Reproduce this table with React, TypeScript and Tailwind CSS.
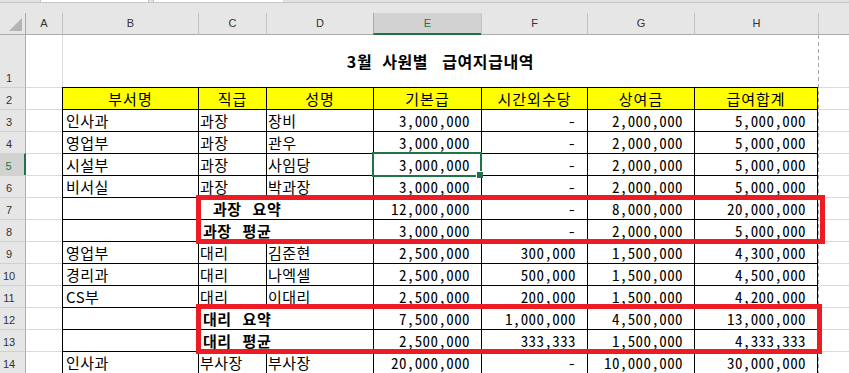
import React from 'react';

type Row = {
  n: number;
  b?: string;
  c?: string;
  d?: string;
  sum?: [string, string];
  indent?: boolean;
  e: string;
  f: string;
  g: string;
  h: string;
};

const rows: Row[] = [
  { n: 3, b: '인사과', c: '과장', d: '장비', e: '3,000,000', f: '-', g: '2,000,000', h: '5,000,000' },
  { n: 4, b: '영업부', c: '과장', d: '관우', e: '3,000,000', f: '-', g: '2,000,000', h: '5,000,000' },
  { n: 5, b: '시설부', c: '과장', d: '사임당', e: '3,000,000', f: '-', g: '2,000,000', h: '5,000,000' },
  { n: 6, b: '비서실', c: '과장', d: '박과장', e: '3,000,000', f: '-', g: '2,000,000', h: '5,000,000' },
  { n: 7, sum: ['과장', '요약'], indent: true, e: '12,000,000', f: '-', g: '8,000,000', h: '20,000,000' },
  { n: 8, sum: ['과장', '평균'], e: '3,000,000', f: '-', g: '2,000,000', h: '5,000,000' },
  { n: 9, b: '영업부', c: '대리', d: '김준현', e: '2,500,000', f: '300,000', g: '1,500,000', h: '4,300,000' },
  { n: 10, b: '경리과', c: '대리', d: '나엑셀', e: '2,500,000', f: '500,000', g: '1,500,000', h: '4,500,000' },
  { n: 11, b: 'CS부', c: '대리', d: '이대리', e: '2,500,000', f: '200,000', g: '1,500,000', h: '4,200,000' },
  { n: 12, sum: ['대리', '요약'], e: '7,500,000', f: '1,000,000', g: '4,500,000', h: '13,000,000' },
  { n: 13, sum: ['대리', '평균'], e: '2,500,000', f: '333,333', g: '1,500,000', h: '4,333,333' },
  { n: 14, b: '인사과', c: '부사장', d: '부사장', e: '20,000,000', f: '-', g: '10,000,000', h: '30,000,000' },
];

const heads: [string, string][] = [
  ['부서명', 'w-[136px]'],
  ['직급', 'w-[68px]'],
  ['성명', 'w-[107px]'],
  ['기본급', 'w-[108px]'],
  ['시간외수당', 'w-[106px]'],
  ['상여금', 'w-[107px]'],
  ['급여합계', 'w-[124px] border-r'],
];

const cols: [string, string][] = [
  ['B', 'w-[136px]'],
  ['C', 'w-[68px]'],
  ['D', 'w-[107px]'],
  ['E', 'w-[108px]'],
  ['F', 'w-[106px]'],
  ['G', 'w-[107px]'],
  ['H', 'w-[124px]'],
];

const kr = "font-['Noto_Sans_CJK_KR',sans-serif]";
const ui = "font-['Liberation_Sans','Noto_Sans',sans-serif] text-[11px] leading-[13px]";
const cell = 'flex items-center border-l border-t border-black whitespace-nowrap overflow-hidden';
const text = `${cell} ${kr} text-[15px] leading-[16px] tracking-[0.5px] text-black`;
const num = `${cell} justify-end pr-[11px] ${kr} [font-feature-settings:'hwid'] text-[15px] leading-[16px] tracking-[0.4px] text-black`;

function RowHead({ n, tall }: { n: number; tall?: boolean }) {
  const sel = n === 5;
  return (
    <div
      className={`${ui} w-[26px] flex items-end justify-center pr-[7px] pb-[2px] ${
        sel
          ? 'bg-[#d2d2d2] border-r-2 border-r-[#217346] text-[#217346]'
          : 'bg-[#e6e6e6] border-r border-r-[#ababab] text-[#333]'
      } ${tall ? '' : 'border-t border-t-[#d0d0d0]'}`}
    >
      {n}
    </div>
  );
}

function DataRow({ r }: { r: Row }) {
  return (
    <div className="flex h-[22px]">
      <RowHead n={r.n} />
      <div className="w-[36px] border-t border-[#dadada]" />
      <div className={`${text} w-[136px] pl-[3px]`}>{r.b}</div>
      {r.sum ? (
        <div className={`${text} w-[175px] font-bold ${r.indent ? 'pl-[14px]' : 'pl-[4px]'}`}>
          <span className="mr-[11px]">{r.sum[0]}</span>
          <span>{r.sum[1]}</span>
        </div>
      ) : (
        <>
          <div className={`${text} w-[68px] pl-[1px]`}>{r.c}</div>
          <div className={`${text} w-[107px] pl-[1px]`}>{r.d}</div>
        </>
      )}
      <div className={`${num} w-[108px]`}>{r.e}</div>
      <div className={`${num} w-[106px]`}>{r.f}</div>
      <div className={`${num} w-[107px]`}>{r.g}</div>
      <div className={`${num} w-[124px] border-r`}>{r.h}</div>
      <div className="flex-1 border-t border-[#dadada]" />
    </div>
  );
}

export default function App() {
  return (
    <div className="relative w-[849px] h-[373px] overflow-hidden bg-white">
      {/* formula bar edge */}
      <div className="flex h-[2px] bg-[#e1e1e1]">
        <div className="w-[40px]" />
        <div className="w-[109px] bg-white border-x border-[#c6c6c6]" />
        <div className="w-[4px]" />
        <div className="w-[130px] bg-white border-l border-[#c6c6c6]" />
      </div>
      <div className="h-px bg-[#c6c6c6]" />
      <div className="h-[10px] bg-[#e6e6e6]" />

      {/* column headers */}
      <div className={`flex h-[22px] bg-[#e6e6e6] ${ui} text-[#333]`}>
        <div className="w-[26px] border-r border-b border-[#ababab] flex items-end justify-end p-[3px]">
          <svg width="13" height="13" viewBox="0 0 13 13">
            <polygon points="13,0 13,13 0,13" fill="#b4b4b4" />
          </svg>
        </div>
        <div className="w-[36px] border-b border-[#ababab] flex items-center justify-center">A</div>
        {cols.map(([l, w]) =>
          l === 'E' ? (
            <div
              key={l}
              className={`${w} bg-[#d2d2d2] border-l border-l-[#ababab] border-b-2 border-b-[#217346] text-[#217346] flex items-center justify-center pt-[1px]`}
            >
              {l}
            </div>
          ) : (
            <div key={l} className={`${w} border-l border-l-[#c3c3c3] border-b border-b-[#ababab] flex items-center justify-center`}>
              {l}
            </div>
          )
        )}
        <div className="flex-1 border-l border-l-[#c3c3c3] border-b border-b-[#ababab]" />
      </div>

      {/* row 1: title */}
      <div className="flex h-[52px]">
        <RowHead n={1} tall />
        <div className="w-[36px]" />
        <div className={`w-[756px] border-l border-[#dadada] flex items-center justify-center ${kr} text-[16px] leading-[18px] tracking-[0.6px] font-bold text-black`}>
          <span className="mr-[10px]">3월</span>
          <span className="mr-[14px]">사원별</span>
          <span>급여지급내역</span>
        </div>
        <div className="flex-1" />
      </div>

      {/* row 2: table head */}
      <div className="flex h-[22px]">
        <RowHead n={2} />
        <div className="w-[36px] border-t border-[#dadada]" />
        {heads.map(([t, w]) => (
          <div key={t} className={`${cell} ${w} justify-center bg-[#ffff00] ${kr} text-[15px] leading-[16px] tracking-[1px] text-black`}>
            {t}
          </div>
        ))}
        <div className="flex-1 border-t border-[#dadada]" />
      </div>

      {rows.map(r => (
        <DataRow key={r.n} r={r} />
      ))}

      {/* page break */}
      <div className="absolute left-[818px] top-[35px] bottom-0 w-px bg-[repeating-linear-gradient(to_bottom,#a6a6a6_0px,#a6a6a6_4px,transparent_4px,transparent_7px)]" />

      {/* active cell E5 */}
      <div className="absolute left-[372px] top-[152px] w-[110px] h-[25px] border-2 border-[#217346]" />
      <div className="absolute left-[476px] top-[171px] w-[7px] h-[7px] bg-[#217346] border-l border-t border-white" />

      {/* red highlight boxes */}
      <div className="absolute left-[196px] top-[195px] w-[629px] h-[49px] border-[5px] border-[#ed1c24]" />
      <div className="absolute left-[196px] top-[304px] w-[626px] h-[50px] border-[5px] border-[#ed1c24]" />
    </div>
  );
}
